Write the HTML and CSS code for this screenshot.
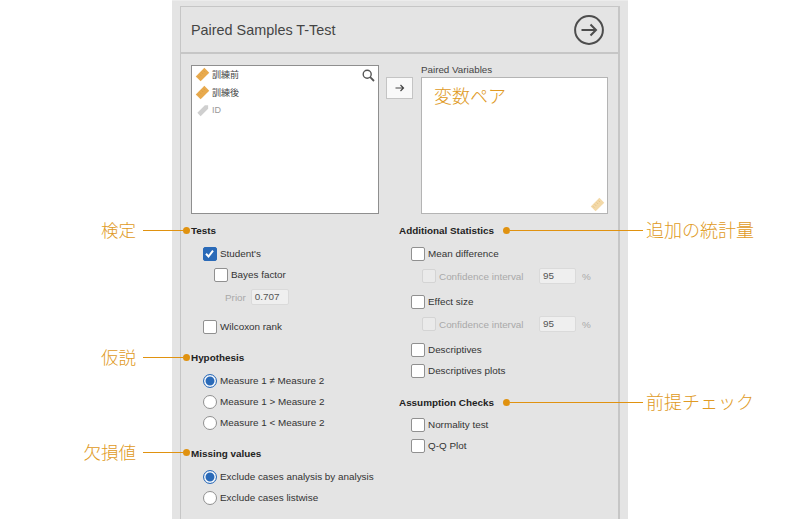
FILE: index.html
```html
<!DOCTYPE html>
<html lang="ja">
<head>
    <meta charset="UTF-8">
    <title>Paired Samples T-Test</title>
    <link rel="stylesheet" href="styles.css">
</head>
<body>
    <svg class="defs" width="0" height="0">
        <symbol id="ruler" viewBox="0 0 16 16">
            <path d="M10 0.8 L15.2 6 L6 15.2 L0.8 10 Z" fill="currentColor"/>
            <path d="M9 3.8 L10.6 5.4 M7 5.8 L8.6 7.4 M5 7.8 L6.6 9.4 M3 9.8 L4.6 11.4" stroke="#b87c20" stroke-opacity=".35" stroke-width=".7" fill="none"/>
        </symbol>
        <symbol id="tag" viewBox="0 0 16 16">
            <path d="M10.5 2.5 L14 2.5 L14 6 L6 14 L2.5 10.5 Z" fill="currentColor"/>
        </symbol>
    </svg>

    <div class="panel">
        <div class="frame">
            <header class="head">
                <h1>Paired Samples T-Test</h1>
                <svg class="go" width="30" height="30" viewBox="0 0 30 30">
                    <circle cx="15" cy="15" r="13.9" fill="none" stroke="#4d4d4d" stroke-width="2"/>
                    <path d="M7.5 15 H22 M16.5 9.5 L22 15 L16.5 20.5" fill="none" stroke="#4d4d4d" stroke-width="2"/>
                </svg>
            </header>

            <div class="vars">
                <div class="source">
                    <svg class="search" width="13" height="13" viewBox="0 0 13 13">
                        <circle cx="5.2" cy="5.2" r="4" fill="none" stroke="#555" stroke-width="1.4"/>
                        <path d="M8.2 8.2 L12 12" stroke="#555" stroke-width="1.8"/>
                    </svg>
                    <div class="var"><svg class="ico scale"><use href="#ruler"/></svg>訓練前</div>
                    <div class="var"><svg class="ico scale"><use href="#ruler"/></svg>訓練後</div>
                    <div class="var off"><svg class="ico nominal"><use href="#tag"/></svg>ID</div>
                </div>
                <button class="move">
                    <svg width="10" height="8" viewBox="0 0 10 8"><path d="M0.5 4 H8.5 M5.5 1 L8.5 4 L5.5 7" fill="none" stroke="#444" stroke-width="1.2"/></svg>
                </button>
                <div class="target-wrap">
                    <div class="target-label">Paired Variables</div>
                    <div class="target">
                        <span class="target-note">変数ペア</span>
                        <svg class="ico scale faded"><use href="#ruler"/></svg>
                    </div>
                </div>
            </div>

            <div class="options">
                <div class="col">
                    <h2>Tests</h2>
                    <div class="row in1"><span class="box on"><svg width="13" height="13" viewBox="0 0 13 13"><path d="M3 6.8 L5.5 9.5 L10 3.6" fill="none" stroke="#fff" stroke-width="2"/></svg></span>Student's</div>
                    <div class="row in2"><span class="box"></span>Bayes factor</div>
                    <div class="row prior"><span class="dim">Prior</span><span class="num wide">0.707</span></div>
                    <div class="row in1 wilcoxon"><span class="box"></span>Wilcoxon rank</div>

                    <h2 class="hyp">Hypothesis</h2>
                    <div class="row in1 first"><span class="radio on"></span>Measure 1 ≠ Measure 2</div>
                    <div class="row in1"><span class="radio"></span>Measure 1 &gt; Measure 2</div>
                    <div class="row in1"><span class="radio"></span>Measure 1 &lt; Measure 2</div>

                    <h2 class="miss">Missing values</h2>
                    <div class="row in1 first"><span class="radio on"></span>Exclude cases analysis by analysis</div>
                    <div class="row in1"><span class="radio"></span>Exclude cases listwise</div>
                </div>

                <div class="col">
                    <h2>Additional Statistics</h2>
                    <div class="row in1"><span class="box"></span>Mean difference</div>
                    <div class="row in2 ci"><span class="box off"></span><span class="dim label">Confidence interval</span><span class="num">95</span><span class="dim">%</span></div>
                    <div class="row in1 after-ci"><span class="box"></span>Effect size</div>
                    <div class="row in2 ci"><span class="box off"></span><span class="dim label">Confidence interval</span><span class="num">95</span><span class="dim">%</span></div>
                    <div class="row in1 after-ci"><span class="box"></span>Descriptives</div>
                    <div class="row in1"><span class="box"></span>Descriptives plots</div>

                    <h2 class="assume">Assumption Checks</h2>
                    <div class="row in1 first2"><span class="box"></span>Normality test</div>
                    <div class="row in1"><span class="box"></span>Q-Q Plot</div>
                </div>
            </div>
        </div>
    </div>

    <!-- callouts sit over the panel -->
    <div class="note left n-tests"><span>検定</span><i></i><b></b></div>
    <div class="note left n-hyp"><span>仮説</span><i></i><b></b></div>
    <div class="note left n-miss"><span>欠損値</span><i></i><b></b></div>
    <div class="note right n-add"><b></b><i></i><span>追加の統計量</span></div>
    <div class="note right n-assume"><b></b><i></i><span>前提チェック</span></div>
</body>
</html>
```

FILE: styles.css
```css
body {
    margin: 0;
    background: #fff;
    font-family: "Liberation Sans", "Noto Sans CJK JP", sans-serif;
    color: #333;
    overflow: hidden;
}
.defs {
    position: absolute;
}
.panel {
    box-sizing: border-box;
    width: 456px;
    height: 519px;
    margin-left: 172px;
    padding: 5px 8px 0 8px;
    background: #e4e4e4;
    border-top: 1px solid #ececec;
}
.frame {
    box-sizing: border-box;
    height: 513px;
    border: 1px solid #c6c6c6;
    border-width: 1px 2px 0 1px;
    padding-left: 10px;
}
.head {
    display: flex;
    align-items: center;
    justify-content: space-between;
    height: 45px;
    margin-left: -10px;
    padding: 0 14px 0 10px;
    border-bottom: 2px solid #c6c6c6;
}
.head h1 {
    margin: 0;
    font-size: 14.4px;
    font-weight: normal;
    color: #444;
}

/* variable boxes */
.vars {
    display: flex;
    margin-top: 11px;
    height: 149px;
}
.source {
    position: relative;
    box-sizing: border-box;
    width: 188px;
    height: 149px;
    background: #fff;
    border: 1px solid #8f8f8f;
}
.search {
    position: absolute;
    top: 3px;
    right: 3px;
}
.var {
    display: flex;
    align-items: center;
    gap: 2px;
    height: 18px;
    padding-left: 3px;
    font-size: 9px;
    color: #444;
}
.search + .var {
    margin-top: -1px;
}
.var.off {
    color: #999;
}
.ico {
    width: 15px;
    height: 15px;
}
.scale {
    color: #e8aa4e;
}
.nominal {
    color: #cfcfcf;
}
.move {
    box-sizing: border-box;
    display: flex;
    align-items: center;
    justify-content: center;
    width: 27px;
    height: 22px;
    margin: 12px 8px 0 7px;
    padding: 0;
    background: #f9f9f9;
    border: 1px solid #c4c4c4;
}
.target-wrap {
    width: 187px;
}
.target-label {
    height: 12px;
    font-size: 9.8px;
    line-height: 10px;
    color: #444;
}
.target {
    position: relative;
    box-sizing: border-box;
    height: 137px;
    background: #fff;
    border: 1px solid #b4b4b4;
}
.target-note {
    display: block;
    margin: 8px 0 0 12px;
    font-size: 18px;
    line-height: 22px;
    font-weight: 300;
    color: #e09a24;
}
.faded {
    position: absolute;
    right: 2px;
    bottom: 1px;
    color: #f3d9a8;
}

/* option columns */
.options {
    display: flex;
    margin-top: 11px;
}
.col {
    width: 208px;
}
h2 {
    margin: 0;
    height: 12px;
    font-size: 9.9px;
    line-height: 12px;
    font-weight: bold;
    color: #222;
}
.row {
    display: flex;
    align-items: center;
    height: 21px;
    font-size: 9.9px;
    color: #333;
}
.in1 {
    padding-left: 12px;
}
.in2 {
    padding-left: 23px;
}
.col > h2 + .row {
    margin-top: 6px;
}
.col > h2 + .first {
    margin-top: 6px;
}
.col > h2 + .first2 {
    margin-top: 5px;
}
.prior {
    height: 22px;
    margin-top: 1px;
    padding-left: 34px;
}
.wilcoxon {
    margin-top: 8px;
}
.hyp {
    margin-top: 15px;
}
.miss {
    margin-top: 15px;
}
.assume {
    margin-top: 16px;
}
.ci {
    height: 22px;
    margin-top: 1px;
}
.after-ci {
    margin-top: 4px;
}
.box,
.radio {
    box-sizing: border-box;
    flex: none;
    width: 14px;
    height: 14px;
    margin-right: 3px;
    background: #fff;
    border: 1px solid #909090;
}
.box {
    border-radius: 2px;
}
.box.on {
    background: #2a6ab8;
    border-color: #2a6ab8;
}
.box.on svg {
    display: block;
    margin: -1px;
}
.box.off {
    background: #eaeaea;
    border-color: #d4d4d4;
}
.radio {
    border-radius: 50%;
}
.radio.on {
    border: 1.5px solid #2a6ab8;
    box-shadow: inset 0 0 0 1.5px #fff, inset 0 0 0 8px #2a6ab8;
}
.dim {
    color: #a9a9a9;
}
.label {
    width: 97px;
}
.num {
    box-sizing: border-box;
    width: 37px;
    height: 16px;
    padding-left: 3px;
    margin: 0 6px 0 3px;
    line-height: 14px;
    color: #555;
    background: #efefef;
    border: 1px solid #dadada;
    border-radius: 2px;
}
.wide {
    width: 38px;
    margin: 0 0 0 5px;
    padding-left: 3px;
}

/* callouts */
.note {
    position: absolute;
    display: flex;
    align-items: center;
    height: 24px;
    font-size: 18px;
    font-weight: 300;
    color: #e09a24;
}
.note span {
    position: relative;
    top: -1px;
}
.note i {
    display: block;
    height: 1px;
    background: #e09210;
}
.note b {
    display: block;
    flex: none;
    width: 7px;
    height: 7px;
    border-radius: 50%;
    background: #e09210;
}
.note.left {
    right: 610px;
    font-size: 17.5px;
}
.note.left i {
    width: 40px;
    margin-left: 7px;
}
.note.right {
    left: 503px;
}
.note.right i {
    width: 133px;
}
.note.right span {
    margin-left: 3px;
}
.n-tests { top: 218px; }
.n-hyp { top: 345px; }
.n-miss { top: 440px; }
.n-add { top: 218px; }
.n-assume { top: 390px; }
```
